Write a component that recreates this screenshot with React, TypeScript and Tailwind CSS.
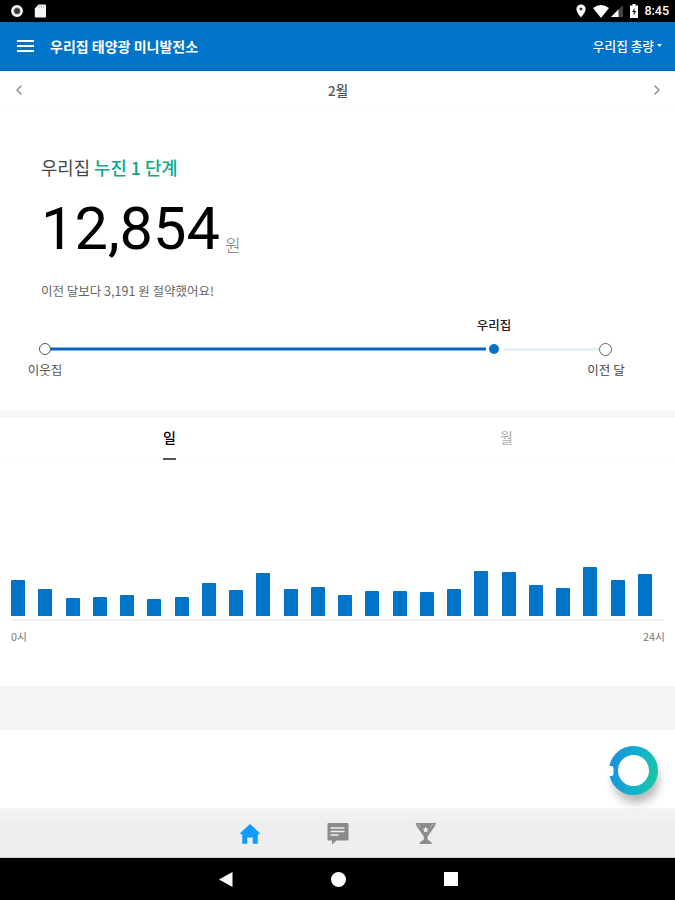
import { ChevronLeft, ChevronRight } from 'lucide-react'

const HOURLY_USAGE = [
  36, 27.5, 18.5, 19.5, 21.5, 17.5, 19.5, 33.5, 26.5, 43.5, 27.5, 29,
  21, 25, 25.5, 24.5, 27, 45, 44.5, 31, 28.5, 49, 36, 42,
]

function StatusBar() {
  return (
    <div className="flex h-[22px] items-center justify-between bg-black pl-[11px] pr-[6px] text-white">
      <div className="flex items-center gap-[11px]">
        <svg className="h-3 w-3" viewBox="0 0 12 12">
          <circle cx="6" cy="6" r="4.7" fill="#777" stroke="#fff" strokeWidth="2.4" />
          <circle cx="6" cy="6" r="2.5" fill="#333" />
        </svg>
        <svg className="h-[14px] w-3" viewBox="0 0 12 14">
          <path d="M4.5 0.5H11a1 1 0 0 1 1 1V12.5a1 1 0 0 1-1 1H1.8a1 1 0 0 1-1-1V4.5z" fill="#f5f5f5" />
          <path d="M5 1.5v2.5M7.3 1.5v2.5M9.6 1.5v2.5" stroke="#bbb" strokeWidth="1" />
        </svg>
      </div>
      <div className="flex items-center">
        <svg className="mr-[7px] h-[14px] w-[10px]" viewBox="0 0 10 14">
          <path d="M5 0.5a4.6 4.6 0 0 1 4.6 4.6C9.6 8.5 5 13.5 5 13.5S.4 8.5.4 5.1A4.6 4.6 0 0 1 5 .5z" fill="#fff" />
          <circle cx="5" cy="5" r="1.5" fill="#333" />
        </svg>
        <svg className="mr-[2px] h-[13px] w-4" viewBox="0 0 16 13">
          <path d="M8 13L0 3Q8-3 16 3z" fill="#fff" />
        </svg>
        <svg className="mr-[7px] h-3 w-3" viewBox="0 0 12 12">
          <path d="M12 0v12H0z" fill="#444" />
          <path d="M7.5 4.5V12H0z" fill="#fff" />
        </svg>
        <svg className="mr-[6px] h-[14px] w-2" viewBox="0 0 8 14">
          <path d="M2.5 0h3v1.5H8V14H0V1.5h2.5z" fill="#fff" />
          <path d="M4.6 4L2 8h1.7v3.5L6.2 7H4.5z" fill="#222" />
        </svg>
        <span className="font-[Roboto] text-[12.5px] leading-none font-medium">8:45</span>
      </div>
    </div>
  )
}

function Header() {
  return (
    <header className="flex h-[49px] items-center border-b border-[#0062bd] bg-[#0074c9] pr-[13px] pl-[17px] text-white">
      <button aria-label="메뉴" className="flex w-[17px] flex-col gap-[3px]">
        <span className="h-[2px] bg-white" />
        <span className="h-[2px] bg-white" />
        <span className="h-[2px] bg-white" />
      </button>
      <h1 className="ml-[16px] text-[14px] font-bold whitespace-nowrap">우리집 태양광 미니발전소</h1>
      <button className="ml-auto flex items-center gap-[3px] text-[12.7px] font-medium whitespace-nowrap">
        우리집 총량
        <svg className="h-[3px] w-[5px]" viewBox="0 0 5 3">
          <path d="M0 0h5L2.5 3z" fill="#fff" />
        </svg>
      </button>
    </header>
  )
}

function CompareSlider() {
  return (
    <div className="relative mt-[17px] h-[66px]">
      <div className="absolute top-[30px] left-[50px] flex h-[4px] w-[550px] items-center">
        <div className="h-full w-[436px] border-y border-[#7fb4e6] bg-[#0b62bf]" />
        <div className="ml-[18px] h-[3px] flex-1 bg-[#e2f2f9]" />
      </div>
      <span className="absolute top-[26px] left-[39px] h-3 w-3 rounded-full border-[1.5px] border-[#555] bg-white" />
      <span className="absolute top-[27px] left-[489px] h-[10px] w-[10px] rounded-full bg-[#0a6fcb]" />
      <span className="absolute top-[26px] left-[599px] h-[13px] w-[13px] rounded-full border-[1.5px] border-[#666] bg-white" />
      <span className="absolute top-0 left-[454px] w-20 text-center text-[12.5px] leading-4 font-medium text-[#222]">우리집</span>
      <span className="absolute top-[45px] left-[5px] w-20 text-center text-[12.5px] leading-4 text-[#555]">이웃집</span>
      <span className="absolute top-[45px] left-[566px] w-20 text-center text-[12.5px] leading-4 text-[#444]">이전 달</span>
    </div>
  )
}

function UsageChart() {
  return (
    <section className="flex h-[226px] flex-col bg-white px-[11px]">
      <div className="flex h-[156px] items-end justify-between pr-[12px]">
        {HOURLY_USAGE.map((h, i) => (
          <div key={i} className="w-[14px] rounded-t-[1px] bg-[#0074c9]" style={{ height: h }} />
        ))}
      </div>
      <div className="mt-[3px] h-[2px] bg-[#eef0f2]" />
      <div className="mt-[7px] -mr-px flex justify-between text-[10.8px] leading-4 text-[#777]">
        <span>0시</span>
        <span>24시</span>
      </div>
    </section>
  )
}

function BottomNav() {
  return (
    <nav className="flex h-[50px] items-center justify-center gap-[66px] border-b border-[#ccc] bg-gradient-to-b from-[#f5f5f5] to-[#eeeeee] to-30% pt-[2px]">
      <svg className="h-[22px] w-[22px]" viewBox="0 0 22 22">
        <path d="M11 1l10 9.2-.8 1.1H18.8V20.7H13.7V14.5H8.3v6.200H3.200V11.300H1.800L1 10.200z" fill="#109cff" />
      </svg>
      <svg className="h-[22px] w-[22px]" viewBox="0 0 22 22">
        <path d="M1.5 0h19a1 1 0 0 1 1 1v15.500a1 1 0 0 1-1 1H9.500L5 21.500v-4H1.500a1 1 0 0 1-1-1V1a1 1 0 0 1 1-1z" fill="#8b8b8b" />
        <path d="M3.500 5h14M3.500 8.500h14M3.500 12h8" stroke="#f0f0f0" strokeWidth="1.500" />
      </svg>
      <svg className="h-[22px] w-[22px]" viewBox="0 0 22 22">
        <path d="M.6 0h20.300L19.800 3.200l-7.200 10.300v3.200c1.600.8 3.600 2 4.600 4.300H4.200c1-2.300 3-3.500 4.600-4.300v-3.200L1.700 3.200z" fill="#8b8b8b" />
        <path d="M10.700 3.600l.9 1.900 2.100.3-1.500 1.500.3 2.100-1.800-1-1.800 1 .3-2.100-1.500-1.500 2.100-.3z" fill="#f0f0f0" />
        <path d="M2.300 1.800h2l.8 2.600M19.100 1.800h-2l-.8 2.600" fill="none" stroke="#b5b5b5" strokeWidth="0.900" />
      </svg>
    </nav>
  )
}

export default function App() {
  return (
    <div className="relative h-[900px] w-[675px] overflow-hidden bg-white font-['Noto_Sans_CJK_KR',sans-serif]">
      <StatusBar />
      <Header />

      <div className="flex h-[39px] items-center justify-between border-b border-[#fafafa] pr-[10px] pl-[11px]">
        <ChevronLeft className="h-4 w-4 text-[#929292]" strokeWidth={2.4} />
        <span className="text-[13.5px] font-medium text-[#555]">2월</span>
        <ChevronRight className="h-4 w-4 text-[#929292]" strokeWidth={2.4} />
      </div>

      <section className="h-[301px] pt-[44px]">
        <div className="pl-[41px]">
          <p className="text-[17.8px] leading-[26px] text-[#444]">
            우리집 <span className="font-medium text-[#0aa88d]">누진 1 단계</span>
          </p>
          <p className="mt-[14px] flex h-[66px] items-baseline gap-[5px]">
            <span className="font-[Roboto] text-[59.5px] leading-[70px] text-black">12,854</span>
            <span className="relative top-[3px] text-[17px] font-light text-[#777]">원</span>
          </p>
          <p className="mt-[22px] text-[12.5px] leading-[18px] text-[#666]">이전 달보다 3,191 원 절약했어요!</p>
        </div>
        <CompareSlider />
      </section>

      <div className="h-[7px] bg-[#f6f6f6]" />

      <div className="flex h-[42px] border-b border-[#fbfbfb] pl-[1px]">
        <button className="flex flex-1 flex-col items-center pt-[9px] text-[14px] leading-5 font-medium text-black">
          일
          <span className="mt-[11px] h-[2px] w-[13px] shrink-0 bg-[#555]" />
        </button>
        <button className="flex flex-1 flex-col items-center pt-[9px] text-[14px] leading-5 text-[#aaa]">월</button>
      </div>

      <UsageChart />

      <div className="h-[44px] bg-[#f4f6f6]" />

      <div className="relative h-[78px] bg-white">
        <svg className="absolute top-[8px] left-[594px] h-[86px] w-[81px]" viewBox="0 0 81 86">
          <defs>
            <linearGradient id="ring" x1="0" x2="1" y1="0.4" y2="0.6">
              <stop offset="0" stopColor="#1690df" />
              <stop offset="0.55" stopColor="#16b0cc" />
              <stop offset="1" stopColor="#19c8a4" />
            </linearGradient>
            <filter id="soft" x="-30%" y="-30%" width="160%" height="160%">
              <feGaussianBlur stdDeviation="5" />
            </filter>
          </defs>
          <circle cx="42" cy="42" r="23" fill="#000" opacity="0.28" filter="url(#soft)" />
          <circle cx="39.500" cy="32.500" r="24.500" fill="url(#ring)" />
          <circle cx="39.500" cy="32.500" r="15.500" fill="#fff" />
          <rect x="13" y="28" width="6.500" height="10" rx="2" fill="#fff" />
        </svg>
      </div>

      <BottomNav />

      <div className="flex h-[42px] items-center justify-center gap-[98px] bg-black pl-[1px]">
        <svg className="h-[15px] w-[14px]" viewBox="0 0 14 15">
          <path d="M13.500 0v15L0 7.500z" fill="#fff" />
        </svg>
        <span className="h-[15px] w-[15px] rounded-full bg-white" />
        <span className="h-[14px] w-[14px] bg-white" />
      </div>
    </div>
  )
}
